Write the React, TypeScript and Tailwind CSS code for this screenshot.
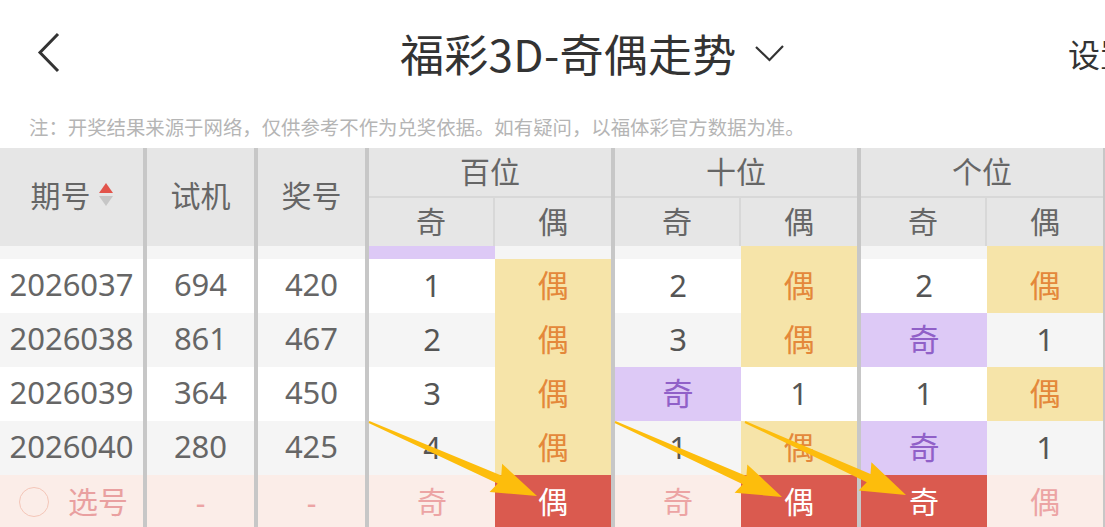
import React from "react";

type Cell = { t: string; kind: "num" | "even" | "odd" | "red" | "pinkOdd" | "pinkEven" };

const SEP = "border-r-4 border-[#c7c7c7]";

function arrowPoints(sx: number, sy: number, tx: number, ty: number, tailW = 2, neckW = 9, headW = 31, headL = 41) {
  const dx = tx - sx;
  const dy = ty - sy;
  const L = Math.hypot(dx, dy);
  const ux = dx / L;
  const uy = dy / L;
  const nx = -uy;
  const ny = ux;
  const bx = tx - ux * headL;
  const by = ty - uy * headL;
  const p = (x: number, y: number) => `${x.toFixed(1)},${y.toFixed(1)}`;
  return [
    p(sx + (nx * tailW) / 2, sy + (ny * tailW) / 2),
    p(bx + (nx * neckW) / 2, by + (ny * neckW) / 2),
    p(bx + (nx * headW) / 2 - ux * 4, by + (ny * headW) / 2 - uy * 4),
    p(tx, ty),
    p(bx - (nx * headW) / 2 - ux * 4, by - (ny * headW) / 2 - uy * 4),
    p(bx - (nx * neckW) / 2, by - (ny * neckW) / 2),
    p(sx - (nx * tailW) / 2, sy - (ny * tailW) / 2),
  ].join(" ");
}

function PosCell({ c, first }: { c: Cell; first: boolean }) {
  const base = first
    ? "w-[126px] shrink-0 flex items-center justify-center pb-[2px]"
    : `w-[120px] shrink-0 ${SEP} flex items-center justify-center pb-[2px]`;
  let cls = "";
  switch (c.kind) {
    case "num":
      cls = "text-[#555]";
      break;
    case "even":
      cls = "bg-[#f6e4a9] text-[#e4883a]";
      break;
    case "odd":
      cls = "bg-[#ddc9f6] text-[#9060c8]";
      break;
    case "red":
      cls = "bg-[#da5a4f] text-white";
      break;
    case "pinkOdd":
    case "pinkEven":
      cls = "text-[#eca4a4]";
      break;
  }
  return <div className={`${base} ${cls}`}>{c.t}</div>;
}

const rows: { no: string; sj: string; jh: string; cells: Cell[] }[] = [
  {
    no: "2026037",
    sj: "694",
    jh: "420",
    cells: [
      { t: "1", kind: "num" },
      { t: "偶", kind: "even" },
      { t: "2", kind: "num" },
      { t: "偶", kind: "even" },
      { t: "2", kind: "num" },
      { t: "偶", kind: "even" },
    ],
  },
  {
    no: "2026038",
    sj: "861",
    jh: "467",
    cells: [
      { t: "2", kind: "num" },
      { t: "偶", kind: "even" },
      { t: "3", kind: "num" },
      { t: "偶", kind: "even" },
      { t: "奇", kind: "odd" },
      { t: "1", kind: "num" },
    ],
  },
  {
    no: "2026039",
    sj: "364",
    jh: "450",
    cells: [
      { t: "3", kind: "num" },
      { t: "偶", kind: "even" },
      { t: "奇", kind: "odd" },
      { t: "1", kind: "num" },
      { t: "1", kind: "num" },
      { t: "偶", kind: "even" },
    ],
  },
  {
    no: "2026040",
    sj: "280",
    jh: "425",
    cells: [
      { t: "4", kind: "num" },
      { t: "偶", kind: "even" },
      { t: "1", kind: "num" },
      { t: "偶", kind: "even" },
      { t: "奇", kind: "odd" },
      { t: "1", kind: "num" },
    ],
  },
];

const lastCells: Cell[] = [
  { t: "奇", kind: "pinkOdd" },
  { t: "偶", kind: "red" },
  { t: "奇", kind: "pinkOdd" },
  { t: "偶", kind: "red" },
  { t: "奇", kind: "red" },
  { t: "偶", kind: "pinkEven" },
];

function GroupHeader({ title }: { title: string }) {
  return (
    <div className={`w-[246px] shrink-0 ${SEP} flex flex-col`}>
      <div className="h-[50px] flex items-center justify-center border-b-2 border-[#d8d8d8] pb-[4px]">{title}</div>
      <div className="flex flex-1">
        <div className="w-[126px] shrink-0 border-r-2 border-[#d8d8d8] flex items-center justify-center pb-[3px]">奇</div>
        <div className="flex-1 flex items-center justify-center pb-[3px]">偶</div>
      </div>
    </div>
  );
}

export default function App() {
  return (
    <div className="relative w-[1105px] h-[527px] overflow-hidden bg-white font-['Noto_Sans','Noto_Sans_CJK_SC',sans-serif]">
      {/* Top bar */}
      <div className="h-[106px] flex items-center overflow-hidden">
        <div className="w-[400px] shrink-0 pl-[37px] flex items-center">
          <svg width="24" height="42" viewBox="0 0 24 42">
            <polyline points="21,2 3,20.5 21,39" fill="none" stroke="#333" strokeWidth="3" strokeLinecap="butt" strokeLinejoin="miter" />
          </svg>
        </div>
        <div className="shrink-0 text-[44px] leading-none tracking-[0.3px] text-[#333] font-['Noto_Sans_CJK_SC',sans-serif]">福彩3D-奇偶走势</div>
        <svg className="ml-[17px] shrink-0" width="32" height="18" viewBox="0 0 32 18">
          <polyline points="2,3 15.5,16 29,2" fill="none" stroke="#333" strokeWidth="2.2" />
        </svg>
        <div className="ml-auto mr-[-27px] shrink-0 text-[32px] leading-none text-[#333] font-['Noto_Sans_CJK_SC',sans-serif]">设置</div>
      </div>

      {/* Note */}
      <div className="h-[42px] flex items-center pl-[29px] text-[19.4px] text-[#b5b5b5] whitespace-nowrap font-['Noto_Sans_CJK_SC',sans-serif]">
        注：开奖结果来源于网络，仅供参考不作为兑奖依据。如有疑问，以福体彩官方数据为准。
      </div>

      {/* Table header */}
      <div className="flex h-[98px] bg-[#e6e6e6] text-[30px] text-[#666] font-['Noto_Sans_CJK_SC',sans-serif]">
        <div className={`w-[147px] shrink-0 ${SEP} flex items-center justify-center gap-[8px] pb-[5px]`}>
          <span>期号</span>
          <svg width="14" height="24" viewBox="0 0 14 24">
            <polygon points="7,0 14,10 0,10" fill="#e2544b" />
            <polygon points="0,13 14,13 7,23" fill="#c6c6c6" />
          </svg>
        </div>
        <div className={`w-[111px] shrink-0 ${SEP} flex items-center justify-center pb-[5px]`}>试机</div>
        <div className={`w-[111px] shrink-0 ${SEP} flex items-center justify-center pb-[5px]`}>奖号</div>
        <GroupHeader title="百位" />
        <GroupHeader title="十位" />
        <GroupHeader title="个位" />
      </div>

      {/* Partial (scrolled) row */}
      <div className="flex h-[13px] bg-[#f5f5f5]">
        <div className={`w-[147px] shrink-0 ${SEP}`} />
        <div className={`w-[111px] shrink-0 ${SEP}`} />
        <div className={`w-[111px] shrink-0 ${SEP}`} />
        <div className="w-[126px] shrink-0 bg-[#ddc9f6]" />
        <div className={`w-[120px] shrink-0 ${SEP}`} />
        <div className="w-[126px] shrink-0" />
        <div className={`w-[120px] shrink-0 ${SEP} bg-[#f6e4a9]`} />
        <div className="w-[126px] shrink-0" />
        <div className={`w-[120px] shrink-0 ${SEP} bg-[#f6e4a9]`} />
      </div>

      {/* Data rows */}
      {rows.map((r, i) => (
        <div key={r.no} className={`flex h-[54px] text-[31px] ${i % 2 === 0 ? "bg-white" : "bg-[#f5f5f5]"}`}>
          <div className={`w-[147px] shrink-0 ${SEP} flex items-center justify-center text-[#666] pb-[3px]`}>{r.no}</div>
          <div className={`w-[111px] shrink-0 ${SEP} flex items-center justify-center text-[#666] pb-[3px]`}>{r.sj}</div>
          <div className={`w-[111px] shrink-0 ${SEP} flex items-center justify-center text-[#666] pb-[3px]`}>{r.jh}</div>
          {r.cells.map((c, j) => (
            <PosCell key={j} c={c} first={j % 2 === 0} />
          ))}
        </div>
      ))}

      {/* Select row */}
      <div className="flex h-[54px] bg-[#fbede8] text-[30px]">
        <div className={`w-[147px] shrink-0 ${SEP} flex items-center justify-center gap-[19px] pl-[4px] text-[#e9a0a0] font-['Noto_Sans_CJK_SC',sans-serif]`}>
          <div className="w-[30px] h-[30px] rounded-full border-[1.5px] border-[#f4c6b8]" />
          <span className="pb-[3px]">选号</span>
        </div>
        <div className={`w-[111px] shrink-0 ${SEP} flex items-center justify-center text-[#eca4a4]`}>-</div>
        <div className={`w-[111px] shrink-0 ${SEP} flex items-center justify-center text-[#eca4a4]`}>-</div>
        {lastCells.map((c, j) => (
          <PosCell key={j} c={c} first={j % 2 === 0} />
        ))}
      </div>

      {/* Annotation arrows */}
      <svg className="absolute left-0 top-0 pointer-events-none" width="1105" height="527" viewBox="0 0 1105 527">
        <polygon points={arrowPoints(369, 422, 537, 496)} fill="#fdbd0c" />
        <polygon points={arrowPoints(615, 422, 782, 497)} fill="#fdbd0c" />
        <polygon points={arrowPoints(745, 422, 906, 495)} fill="#fdbd0c" />
      </svg>
    </div>
  );
}
